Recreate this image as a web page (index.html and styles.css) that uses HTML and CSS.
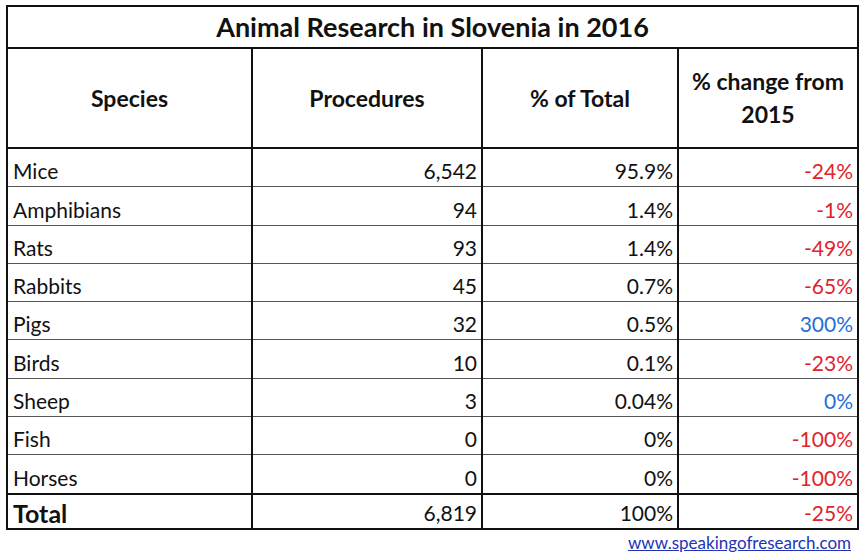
FILE: index.html
```html
<!DOCTYPE html>
<html>
<head>
<meta charset="utf-8">
<link rel="stylesheet" href="styles.css">
</head>
<body>
<div class="wrap">
<table class="data">
  <colgroup>
    <col class="c1"><col class="c2"><col class="c3"><col class="c4">
  </colgroup>
  <thead>
    <tr class="title-row"><th colspan="4">Animal Research in Slovenia in 2016</th></tr>
    <tr class="head-row">
      <th>Species</th>
      <th>Procedures</th>
      <th>% of Total</th>
      <th>% change from<br>2015</th>
    </tr>
  </thead>
  <tbody>
    <tr><td class="name">Mice</td><td class="num">6,542</td><td class="num">95.9%</td><td class="num neg">-24%</td></tr>
    <tr><td class="name">Amphibians</td><td class="num">94</td><td class="num">1.4%</td><td class="num neg">-1%</td></tr>
    <tr><td class="name">Rats</td><td class="num">93</td><td class="num">1.4%</td><td class="num neg">-49%</td></tr>
    <tr><td class="name">Rabbits</td><td class="num">45</td><td class="num">0.7%</td><td class="num neg">-65%</td></tr>
    <tr><td class="name">Pigs</td><td class="num">32</td><td class="num">0.5%</td><td class="num pos">300%</td></tr>
    <tr><td class="name">Birds</td><td class="num">10</td><td class="num">0.1%</td><td class="num neg">-23%</td></tr>
    <tr><td class="name">Sheep</td><td class="num">3</td><td class="num">0.04%</td><td class="num pos">0%</td></tr>
    <tr><td class="name">Fish</td><td class="num">0</td><td class="num">0%</td><td class="num neg">-100%</td></tr>
    <tr><td class="name">Horses</td><td class="num">0</td><td class="num">0%</td><td class="num neg">-100%</td></tr>
    <tr class="total-row"><td class="name">Total</td><td class="num">6,819</td><td class="num">100%</td><td class="num neg">-25%</td></tr>
  </tbody>
</table>
<div class="source"><a href="#">www.speakingofresearch.com</a></div>
</div>
</body>
</html>
```

FILE: styles.css
```css
html, body {
  margin: 0;
  padding: 0;
  background: #ffffff;
}
body {
  font-family: Lato, "Open Sans", "Liberation Sans", sans-serif;
  color: #111;
}
.wrap {
  padding: 5px 0 0 6px;
  width: 851px;
}
.data {
  border-collapse: collapse;
  table-layout: fixed;
  width: 851px;
  border: 2px solid #111;
}
.c1 { width: 245px; }
.c2 { width: 230px; }
.c3 { width: 196px; }
.c4 { width: 180px; }

.title-row th {
  height: 40px;
  padding: 0;
  font-size: 27px;
  font-weight: bold;
  text-align: center;
  vertical-align: middle;
  border-bottom: 2px solid #111;
  line-height: 30px;
}
.head-row th {
  height: 98px;
  padding: 0 4px;
  font-size: 23px;
  font-weight: bold;
  text-align: center;
  vertical-align: middle;
  border-left: 2px solid #111;
  border-right: 2px solid #111;
  border-bottom: 2px solid #111;
  line-height: 33px;
}
td {
  height: 34.3px;
  padding: 0 4px 3px 5px;
  font-size: 21px;
  line-height: 24px;
  vertical-align: bottom;
  border-left: 2px solid #111;
  border-right: 2px solid #111;
  border-bottom: 1px solid #555;
  white-space: nowrap;
}
td.name { text-align: left; }
td.num { text-align: right; }
td.neg { color: #e0242c; }
td.pos { color: #1f6fd6; }

.total-row td {
  height: 30px;
  border-top: 2px solid #111;
  border-bottom: 2px solid #111;
  padding-bottom: 3px;
}
.total-row td.name {
  font-weight: bold;
  font-size: 25px;
}
.source {
  text-align: right;
  padding: 3px 6px 0 0;
  font-size: 17px;
  line-height: 20px;
}
.source a {
  color: #2233b8;
  text-decoration: underline;
}
```
